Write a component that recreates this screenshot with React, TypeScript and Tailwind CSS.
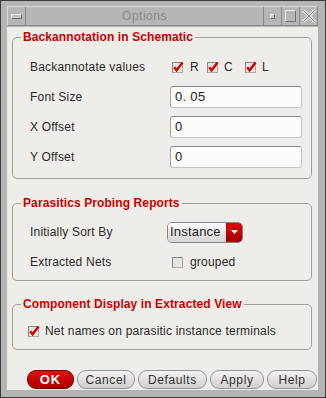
const font = "font-['Liberation_Sans',Arial,sans-serif]";

function Check({ on }: { on: boolean }) {
  return (
    <svg width="13" height="12" viewBox="0 0 13 12" className="shrink-0">
      <rect x="0.5" y="1.5" width="10" height="10" fill="#e6e3e3" stroke="#b0aaaa" />
      <path d="M0.5 11.5 V1.5 H10.5" fill="none" stroke="#8c8686" />
      {on && <path d="M2.2 6.2 L4.6 9.2 L10.6 1.6" fill="none" stroke="#d40000" strokeWidth="2.4" />}
    </svg>
  );
}

function Field({ value }: { value: string }) {
  return (
    <div className="w-[132px] h-[22px] bg-[#fbfbf9] rounded-[3px] border border-[#c8c4c4] border-t-[#8e8888] border-l-[#a8a2a2] flex items-center pl-[4px] text-[13px] text-[#222] tracking-[0.3px]">
      {value}
    </div>
  );
}

function Group({ title, children, className, inner }: { title: string; children: React.ReactNode; className: string; inner: string }) {
  return (
    <fieldset className={`ml-[5px] mr-[6px] border border-[#a59d9d] rounded-[5px] ${className}`}>
      <legend className="ml-[8px] px-[2px] text-[12px] leading-[16px] font-bold text-[#cc0000] tracking-[0.1px]">{title}</legend>
      <div className={inner}>{children}</div>
    </fieldset>
  );
}

function Btn({ label, w, primary }: { label: string; w: string; primary?: boolean }) {
  if (primary)
    return (
      <div className={`${w} h-[19px] rounded-[9px] bg-gradient-to-b from-[#e01010] to-[#a80000] border border-[#7a0000] flex items-center justify-center text-white font-bold text-[13px] tracking-[1px]`}>
        {label}
      </div>
    );
  return (
    <div className={`${w} h-[19px] rounded-[9px] bg-gradient-to-b from-[#f4f2f2] to-[#d2cece] border border-[#9a9494] flex items-center justify-center text-[#333] text-[12px] tracking-[0.6px]`}>
      {label}
    </div>
  );
}

export default function App() {
  return (
    <div className={`w-[326px] h-[398px] bg-[#b4b4b4] border border-[#3a3a3a] flex flex-col pt-[5px] pb-[7px] pl-[6px] pr-[7px] ${font}`}>
      <div className="h-[20px] flex border border-t-[#dadada] border-l-[#dadada] border-b-[#8a8a8a] border-r-[#8a8a8a] bg-[#b6b6b6]">
        <div className="w-[18px] flex items-center justify-center border-r border-[#8a8a8a]">
          <div className="w-[11px] h-[5px] bg-[#c4c4c4] border border-t-[#ececec] border-l-[#ececec] border-b-[#707070] border-r-[#707070]" />
        </div>
        <div className="flex-1 flex items-center justify-center text-[12px] text-[#8a8a8a] tracking-[0.5px]">Options</div>
        <div className="w-[18px] flex items-center justify-center border-l border-[#8a8a8a]">
          <div className="w-[5px] h-[5px] bg-[#c4c4c4] border border-t-[#ececec] border-l-[#ececec] border-b-[#707070] border-r-[#707070]" />
        </div>
        <div className="w-[18px] flex items-center justify-center border-l border-[#8a8a8a]">
          <div className="w-[11px] h-[12px] border border-t-[#ececec] border-l-[#ececec] border-b-[#707070] border-r-[#707070]" />
        </div>
        <div className="w-[18px] flex items-center justify-center border-l border-[#8a8a8a]">
          <svg width="14" height="14" viewBox="0 0 14 14">
            <path d="M1 1 L13 13 M13 1 L1 13" stroke="#e6e6e6" strokeWidth="3" />
            <path d="M1 1 L13 13 M13 1 L1 13" stroke="#8a8a8a" strokeWidth="1" />
          </svg>
        </div>
      </div>

      <div className="mt-[1px] flex-1 bg-[#efede9] flex flex-col text-[12px] text-[#2a2a2a] tracking-[0.2px]">
        <Group title="Backannotation in Schematic" className="mt-[2px]" inner="pt-[7px] pb-[6px] pl-[17px]">
          <div className="h-[30px] flex items-center">
            <span className="w-[142px]">Backannotate values</span>
            <div className="flex items-center">
              <Check on />
              <span className="ml-[5px] w-[17px]">R</span>
              <Check on />
              <span className="ml-[4px] w-[21px]">C</span>
              <Check on />
              <span className="ml-[4px]">L</span>
            </div>
          </div>
          <div className="h-[30px] flex items-center">
            <span className="w-[140px]">Font Size</span>
            <Field value="0. 05" />
          </div>
          <div className="h-[30px] flex items-center">
            <span className="w-[140px]">X Offset</span>
            <Field value="0" />
          </div>
          <div className="h-[30px] flex items-center">
            <span className="w-[140px]">Y Offset</span>
            <Field value="0" />
          </div>
        </Group>

        <Group title="Parasitics Probing Reports" className="mt-[16px]" inner="pt-[6px] pb-[3px] pl-[17px]">
          <div className="h-[30px] flex items-center">
            <span className="w-[137px]">Initially Sort By</span>
            <div className="w-[76px] h-[21px] flex rounded-[5px] overflow-hidden border border-[#8a8484]">
              <div className="flex-1 bg-gradient-to-b from-[#ffffff] to-[#d8d4d4] flex items-center pl-[2px] text-[13px] text-[#222]">Instance</div>
              <div className="w-[16px] bg-gradient-to-b from-[#e00000] to-[#a00000] flex items-center justify-center">
                <svg width="7" height="4" viewBox="0 0 7 4">
                  <path d="M0 0 H7 L3.5 4 Z" fill="#fff" />
                </svg>
              </div>
            </div>
          </div>
          <div className="h-[30px] flex items-center">
            <span className="w-[142px]">Extracted Nets</span>
            <Check on={false} />
            <span className="ml-[5px]">grouped</span>
          </div>
        </Group>

        <Group title="Component Display in Extracted View" className="mt-[15px]" inner="pt-[9px] pb-[8px] pl-[15px]">
          <div className="h-[20px] flex items-center">
            <Check on />
            <span className="ml-[4px]">Net names on parasitic instance terminals</span>
          </div>
        </Group>

        <div className="mt-auto mb-[1px] mr-[1px] flex justify-end gap-[3px]">
          <Btn label="OK" w="w-[47px]" primary />
          <Btn label="Cancel" w="w-[58px]" />
          <Btn label="Defaults" w="w-[69px]" />
          <Btn label="Apply" w="w-[54px]" />
          <Btn label="Help" w="w-[50px]" />
        </div>
      </div>
    </div>
  );
}
